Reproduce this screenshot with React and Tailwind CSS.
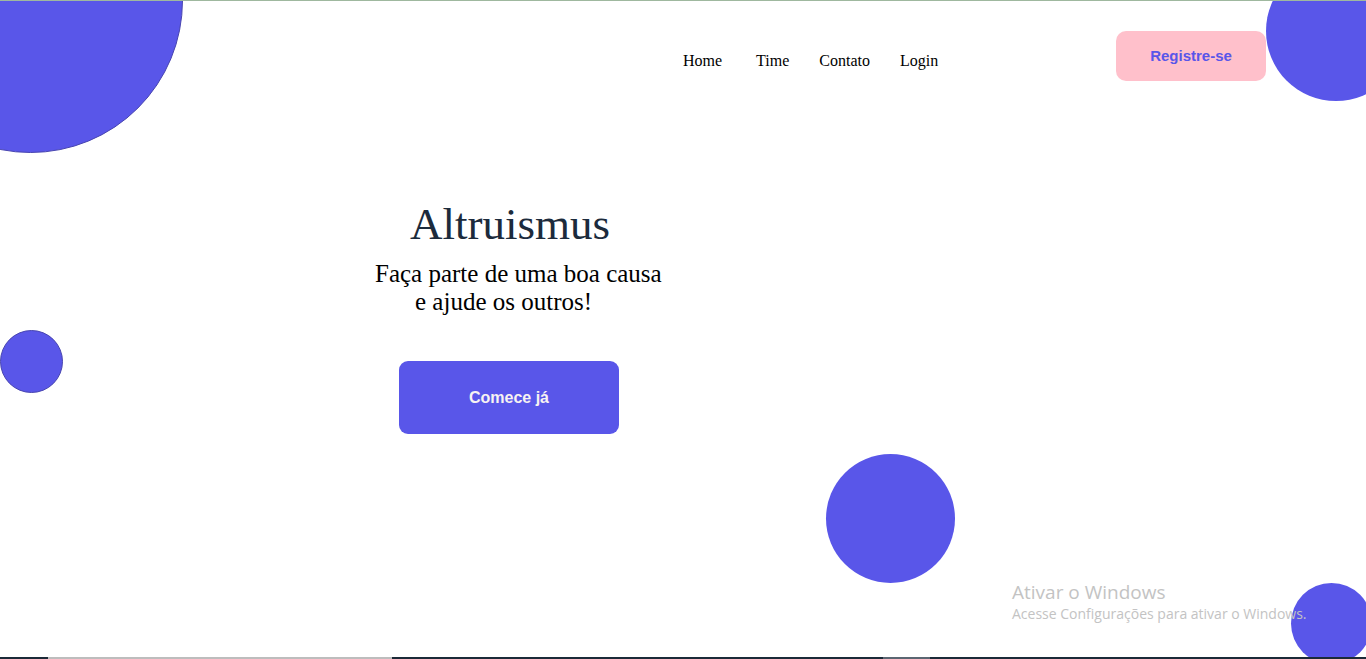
import React from 'react';

const navLinks = ['Home', 'Time', 'Contato', 'Login'];

export default function App() {
    return (
        <div className="relative h-[659px] w-full overflow-hidden bg-white border-t border-[#9fb89f]">
            {/* Decorative circles */}
            <div className="absolute left-[-122px] top-[-153px] h-[305px] w-[305px] rounded-full border border-[#4845b0] bg-[#5956e9]" />
            <div className="absolute left-[1266px] top-[-40px] h-[140px] w-[140px] rounded-full bg-[#5956e9]" />
            <div className="absolute left-0 top-[329px] h-[63px] w-[63px] rounded-full border border-[#4845b0] bg-[#5956e9]" />
            <div className="absolute left-[826px] top-[453px] h-[129px] w-[129px] rounded-full bg-[#5956e9]" />
            <div className="absolute left-[1291px] top-[582px] h-[81px] w-[81px] rounded-full bg-[#5956e9]" />

            {/* Header */}
            <header className="relative flex items-start pt-[30px] pl-[683px] pr-[100px]">
                <nav className="mt-[20px] flex gap-[30px] font-['Liberation_Serif',serif] text-[16px] leading-[20px] text-black">
                    {navLinks.map((label) => (
                        <a key={label} href="#" className={label === 'Home' ? 'pr-[4px]' : ''}>
                            {label}
                        </a>
                    ))}
                </nav>
                <button className="ml-auto h-[50px] w-[150px] rounded-[10px] bg-[#ffc0cb] font-['Liberation_Sans',sans-serif] text-[15px] font-bold text-[#5956e9]">
                    Registre-se
                </button>
            </header>

            {/* Hero */}
            <section className="relative mt-[121px] ml-[375px] flex w-[320px] flex-col items-start">
                <h1 className="ml-[35px] font-['Liberation_Serif',serif] text-[45px] leading-none text-[#1c2b3c]">
                    Altruismus
                </h1>
                <p className="mt-[13px] font-['Liberation_Serif',serif] text-[25px] leading-[28px] text-black">
                    <span className="block">Faça parte de uma boa causa</span>
                    <span className="block pl-[40px]">e ajude os outros!</span>
                </p>
                <button className="mt-[45px] ml-[24px] h-[73px] w-[220px] rounded-[9px] bg-[#5956e9] font-['Liberation_Sans',sans-serif] text-[16px] font-bold text-[#f7f2f2]">
                    Comece já
                </button>
            </section>

            {/* Windows activation watermark */}
            <div className="pointer-events-none absolute left-[1012px] top-[578px] z-10 font-['Open_Sans',sans-serif] text-[#c3c3c3]">
                <p className="text-[19px] leading-[26px]">Ativar o Windows</p>
                <p className="text-[14px] leading-[18px]">Acesse Configurações para ativar o Windows.</p>
            </div>

            {/* Taskbar edge */}
            <div className="absolute bottom-0 left-0 z-10 flex h-[2px] w-full bg-[#1b2a38]">
                <div className="ml-[48px] w-[344px] bg-[#bdbdbd]" />
                <div className="ml-[491px] w-[47px] bg-[#5b6672]" />
            </div>
        </div>
    );
}
